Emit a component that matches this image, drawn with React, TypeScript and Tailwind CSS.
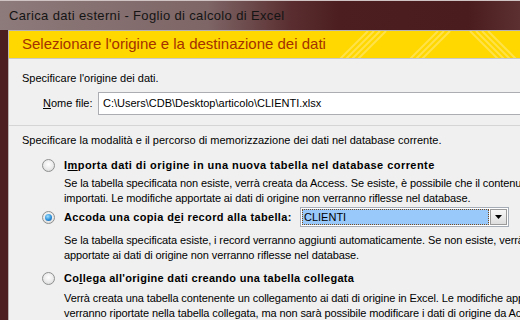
import React from 'react';

function Radio({ checked }: { checked?: boolean }) {
  return (
    <div className="w-[13px] h-[13px] rounded-full border border-[#8e8f8f] bg-[radial-gradient(circle_at_50%_40%,#ffffff_0%,#eaeaea_55%,#cfcfcf_100%)] flex items-center justify-center shrink-0">
      {checked && (
        <div className="w-[7px] h-[7px] rounded-full bg-[radial-gradient(circle_at_40%_35%,#9fe0ff_0%,#2c8fd8_55%,#0d4f9a_100%)]" />
      )}
    </div>
  );
}

export default function App() {
  return (
    <div className="w-[520px] h-[320px] overflow-hidden flex flex-col bg-[#4c1e20] font-['Liberation_Sans',Arial,sans-serif] text-[11px] text-[#000]">
      {/* title bar */}
      <div className="h-[30px] shrink-0 flex items-center pl-[9px] border-t border-[#cfc3c3] bg-[linear-gradient(90deg,#8d7a7a_0%,#7e6566_40%,#5a2e30_56%,#4c1e20_65%,#4a1c1e_90%,#5c2f31_100%)]">
        <span className="text-[13px] text-[#141414] tracking-[0.35px]">Carica dati esterni - Foglio di calcolo di Excel</span>
      </div>

      <div className="flex-1 ml-[8px] border-l border-t border-[#b9b2b2] bg-[#f0f0f0] flex flex-col">
        {/* yellow header */}
        <div className="relative h-[28px] shrink-0 flex items-center pl-[13px] bg-[#ffd800] border-b border-[#c8c8c8] overflow-hidden">
          <svg className="absolute right-0 top-0" width="200" height="28" viewBox="0 0 200 28">
            <g stroke="#ffe766" strokeWidth="2" opacity="0.7">
              <line x1="20" y1="28" x2="48" y2="0" />
              <line x1="26" y1="28" x2="54" y2="0" />
              <line x1="32" y1="28" x2="60" y2="0" />
              <line x1="38" y1="28" x2="66" y2="0" />
              <line x1="90" y1="28" x2="118" y2="0" />
              <line x1="96" y1="28" x2="124" y2="0" />
              <line x1="102" y1="28" x2="130" y2="0" />
              <line x1="150" y1="0" x2="178" y2="28" />
              <line x1="156" y1="0" x2="184" y2="28" />
              <line x1="162" y1="0" x2="190" y2="28" />
              <line x1="168" y1="0" x2="196" y2="28" />
            </g>
          </svg>
          <span className="relative text-[15px] text-[#a43200]">Selezionare l'origine e la destinazione dei dati</span>
        </div>

        {/* body */}
        <div className="flex flex-col pt-[12px] leading-[15px]">
          <div className="pl-[13px]">Specificare l'origine dei dati.</div>

          <div className="flex items-center mt-[6px] pl-[34px]">
            <span className="w-[55px]"><span className="underline">N</span>ome file:</span>
            <div className="h-[23px] flex-1 flex items-center pl-[4px] bg-white border border-[#abadb3] border-r-0">
              C:\Users\CDB\Desktop\articolo\CLIENTI.xlsx
            </div>
          </div>

          <div className="h-px bg-[#d5d5d5] mt-[10px]" />

          <div className="pl-[13px] mt-[7px]">Specificare la modalità e il percorso di memorizzazione dei dati nel database corrente.</div>

          {/* option 1 */}
          <div className="flex items-center mt-[10px] pl-[33px] gap-[9px]">
            <Radio />
            <span className="font-bold tracking-[0.45px] whitespace-nowrap">I<span className="underline">m</span>porta dati di origine in una nuova tabella nel database corrente</span>
          </div>
          <div className="pl-[55px] mt-[3px] whitespace-nowrap tracking-[-0.1px]">
            <div>Se la tabella specificata non esiste, verrà creata da Access. Se esiste, è possibile che il contenuto della tabella venga sovrascritto</div>
            <div>importati. Le modifiche apportate ai dati di origine non verranno riflesse nel database.</div>
          </div>

          {/* option 2 */}
          <div className="flex items-center mt-[1px] pl-[33px] gap-[9px]">
            <Radio checked />
            <span className="font-bold tracking-[0.35px] whitespace-nowrap w-[227px] shrink-0">Accoda una copia d<span className="underline">e</span>i record alla tabella:</span>
            <div className="h-[20px] flex-1 flex items-center bg-white border border-[#a5acb5] p-[1px]">
              <div className="flex-1 h-full flex items-center pl-[2px] bg-[#99c9fb] outline-1 outline-dotted outline-[#7a4a1a] -outline-offset-1">CLIENTI</div>
              <div className="w-[17px] h-full ml-[1px] flex items-center justify-center bg-[linear-gradient(#f7f7f7,#dedede)] border border-[#9a9a9a]">
                <svg width="7" height="4" viewBox="0 0 7 4"><path d="M0 0h7L3.5 4z" fill="#000" /></svg>
              </div>
            </div>
            <div className="w-[2px]" />
          </div>
          <div className="pl-[55px] mt-[6px] whitespace-nowrap tracking-[-0.1px]">
            <div>Se la tabella specificata esiste, i record verranno aggiunti automaticamente. Se non esiste, verrà creata automaticamente.</div>
            <div>apportate ai dati di origine non verranno riflesse nel database.</div>
          </div>

          {/* option 3 */}
          <div className="flex items-center mt-[8px] pl-[33px] gap-[9px]">
            <Radio />
            <span className="font-bold tracking-[0.3px] whitespace-nowrap">Co<span className="underline">l</span>lega all'origine dati creando una tabella collegata</span>
          </div>
          <div className="pl-[55px] mt-[5px] whitespace-nowrap tracking-[-0.1px]">
            <div>Verrà creata una tabella contenente un collegamento ai dati di origine in Excel. Le modifiche apportate ai dati di origine</div>
            <div>verranno riportate nella tabella collegata, ma non sarà possibile modificare i dati di origine da Access.</div>
          </div>
        </div>
      </div>
    </div>
  );
}
